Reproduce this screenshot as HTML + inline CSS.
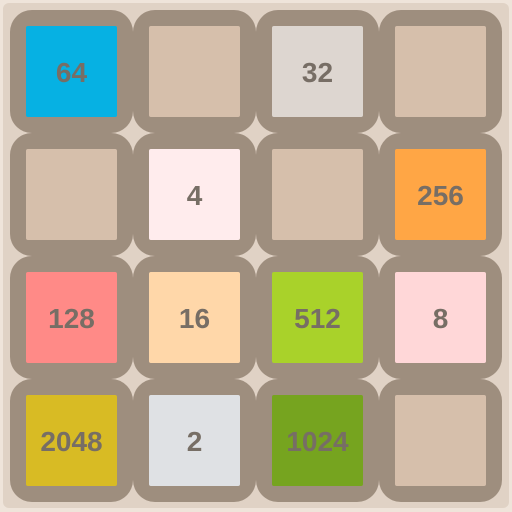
<!DOCTYPE html>
<html><head><style>
body{margin:0;width:512px;height:512px;background:#efe4da;position:relative;overflow:hidden;font-family:"Liberation Sans",sans-serif}
.bg{position:absolute;left:3px;top:3px;width:506px;height:505px;background:#e0d2c5;border-radius:6px}
.f{position:absolute;width:123px;height:123px;background:#9e8e7e;border-radius:22px}
.t{position:absolute;left:16px;top:16px;width:91px;height:91px;border-radius:2px;background:#d6bfab;color:#776e65;font-weight:bold;font-size:28px;display:flex;align-items:center;justify-content:center;padding-top:2px;box-sizing:border-box}
</style></head><body><div class="bg"></div>
<div class="f" style="left:10px;top:10px"><div class="t" style="background:#06b1e3">64</div></div>
<div class="f" style="left:133px;top:10px"><div class="t"></div></div>
<div class="f" style="left:256px;top:10px"><div class="t" style="background:#ddd6d0">32</div></div>
<div class="f" style="left:379px;top:10px"><div class="t"></div></div>
<div class="f" style="left:10px;top:133px"><div class="t"></div></div>
<div class="f" style="left:133px;top:133px"><div class="t" style="background:#ffeced">4</div></div>
<div class="f" style="left:256px;top:133px"><div class="t"></div></div>
<div class="f" style="left:379px;top:133px"><div class="t" style="background:#ffa645">256</div></div>
<div class="f" style="left:10px;top:256px"><div class="t" style="background:#ff8a87">128</div></div>
<div class="f" style="left:133px;top:256px"><div class="t" style="background:#ffd7a9">16</div></div>
<div class="f" style="left:256px;top:256px"><div class="t" style="background:#a9d22a">512</div></div>
<div class="f" style="left:379px;top:256px"><div class="t" style="background:#ffd7d8">8</div></div>
<div class="f" style="left:10px;top:379px"><div class="t" style="background:#d8bb24">2048</div></div>
<div class="f" style="left:133px;top:379px"><div class="t" style="background:#dfe1e4">2</div></div>
<div class="f" style="left:256px;top:379px"><div class="t" style="background:#76a41f">1024</div></div>
<div class="f" style="left:379px;top:379px"><div class="t"></div></div>
</body></html>
